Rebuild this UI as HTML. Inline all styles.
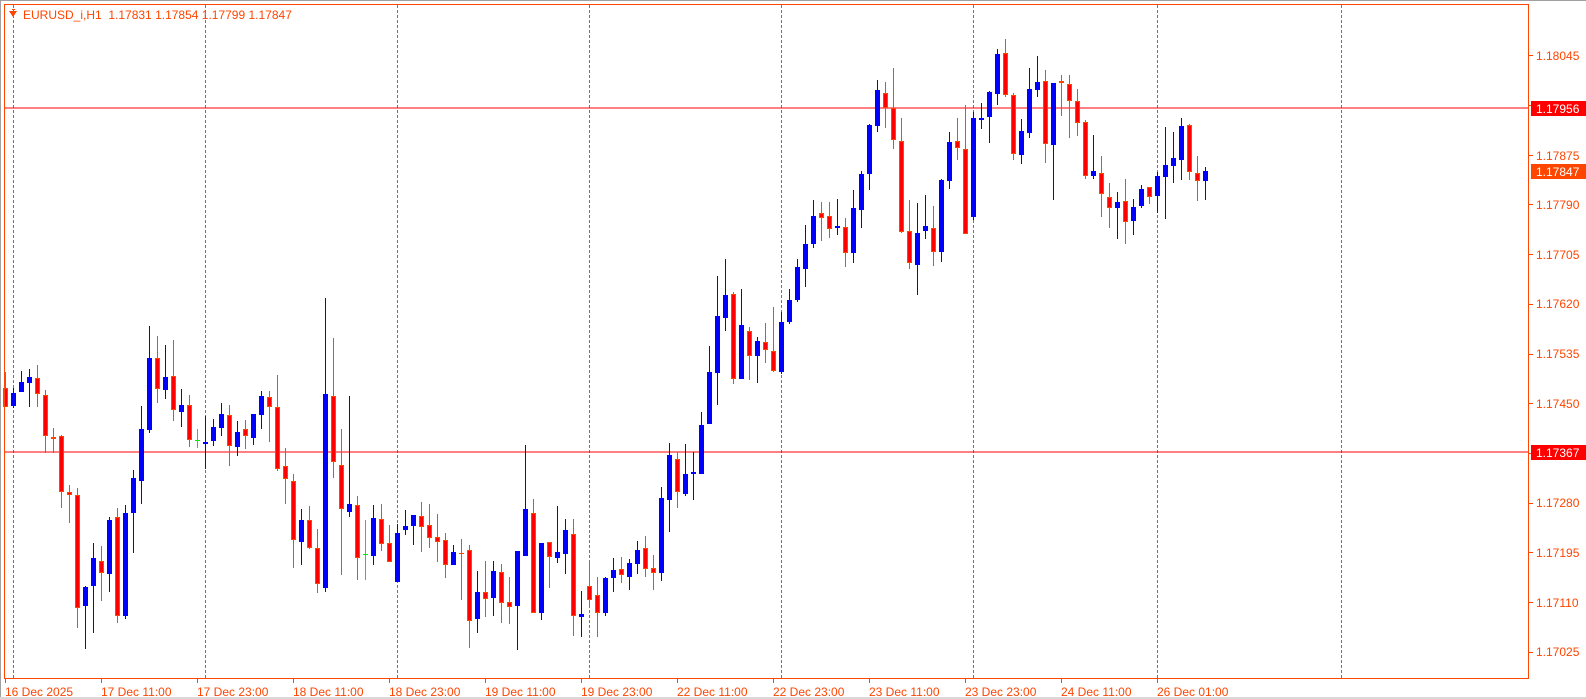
<!DOCTYPE html>
<html><head><meta charset="utf-8"><style>
html,body{margin:0;padding:0;background:#fff;width:1586px;height:699px;overflow:hidden}
svg{position:absolute;left:0;top:0}
text{font-family:"Liberation Sans",sans-serif;font-size:12px}
</style></head><body>
<svg id="c" width="1586" height="699" xmlns="http://www.w3.org/2000/svg" shape-rendering="crispEdges">
<rect x="0" y="0" width="1586" height="1" fill="#a0a0a0"/>
<rect x="0" y="0" width="1" height="699" fill="#a0a0a0"/>
<rect x="0" y="697" width="1586" height="2" fill="#d8d8d8"/>
<g id="vl" stroke="#ff4500" stroke-width="1" stroke-dasharray="3,2"></g>
<rect x="4" y="107.5" width="1525" height="1" fill="#ff0000"/>
<rect x="4" y="451.5" width="1525" height="1" fill="#ff0000"/>
<g id="cd"></g>
<rect x="4.5" y="4.5" width="1524" height="674" fill="none" stroke="#ff4500" stroke-width="1"/>
<g id="tk" fill="#ff4500"></g>
<polygon points="9,11 17,11 13,17" fill="#ff4500"/>
<rect x="12" y="9" width="3" height="1" fill="#ff4500"/>
<text x="23" y="19" fill="#ff4500">EURUSD_i,H1&#160;&#160;1.17831 1.17854 1.17799 1.17847</text>
<g fill="#ff4500">
<text x="1536" y="60">1.18045</text>
<text x="1536" y="160">1.17875</text>
<text x="1536" y="209">1.17790</text>
<text x="1536" y="259">1.17705</text>
<text x="1536" y="308">1.17620</text>
<text x="1536" y="358">1.17535</text>
<text x="1536" y="408">1.17450</text>
<text x="1536" y="507">1.17280</text>
<text x="1536" y="557">1.17195</text>
<text x="1536" y="607">1.17110</text>
<text x="1536" y="656">1.17025</text>
</g>
<rect x="1531" y="101" width="55" height="15" fill="#ff0000"/>
<text x="1536" y="113" fill="#fff">1.17956</text>
<rect x="1531" y="164" width="55" height="15" fill="#ff4500"/>
<text x="1536" y="176" fill="#fff">1.17847</text>
<rect x="1531" y="445" width="55" height="15" fill="#ff0000"/>
<text x="1536" y="457" fill="#fff">1.17367</text>
<g fill="#ff4500">
<text x="5" y="696">16 Dec 2025</text>
<text x="101" y="696">17 Dec 11:00</text>
<text x="197" y="696">17 Dec 23:00</text>
<text x="293" y="696">18 Dec 11:00</text>
<text x="389" y="696">18 Dec 23:00</text>
<text x="485" y="696">19 Dec 11:00</text>
<text x="581" y="696">19 Dec 23:00</text>
<text x="677" y="696">22 Dec 11:00</text>
<text x="773" y="696">22 Dec 23:00</text>
<text x="869" y="696">23 Dec 11:00</text>
<text x="965" y="696">23 Dec 23:00</text>
<text x="1061" y="696">24 Dec 11:00</text>
<text x="1157" y="696">26 Dec 01:00</text>
</g>
</svg>
<script>
var D=[["r",372,388,407,407],["b",388,393,406,408],["b",371,382,392,392],["b",369,377,383,407],["r",365,378,394,407],["r",390,395,436,453],["r",428,437,439,453],["r",435,436,492,508],["r",485,492,495,523],["r",488,495,608,628],
["b",586,587,606,649],["b",543,558,586,633],["r",546,561,573,601],["b",517,520,574,592],["r",508,517,616,623],["b",505,513,616,619],["b",470,478,513,553],["b",406,429,481,504],["b",326,358,430,433],["r",336,358,389,403],
["b",345,377,390,399],["r",340,376,410,421],["b",389,405,412,427],["r",395,405,440,447],["g",429,440,440,448],["b",416,442,444,469],["b",419,427,441,446],["b",403,414,428,436],["r",405,415,446,466],["b",421,432,447,456],
["r",420,429,436,449],["b",414,414,438,445],["b",391,396,415,429],["r",391,397,407,442],["r",375,407,469,471],["r",448,466,479,504],["r",474,481,540,568],["b",509,520,542,565],["r",506,520,548,549],["r",529,548,584,593],
["b",298,394,588,592],["r",338,396,462,478],["r",429,465,509,575],["b",396,504,512,517],["r",496,505,558,580],["g",520,554,554,580],["b",505,518,556,565],["r",504,519,544,551],["r",525,543,562,562],["b",524,533,582,582],
["b",510,526,530,535],["b",515,515,526,545],["r",502,516,527,552],["r",504,525,538,548],["r",514,537,542,562],["r",533,540,565,578],["b",545,552,565,565],["r",539,553,553,600],["r",545,550,621,648],["b",571,592,619,633],
["r",561,592,599,617],["b",561,571,598,616],["r",564,572,603,623],["r",577,602,607,624],["b",551,551,606,650],["b",445,509,556,556],["r",499,513,613,613],["b",543,543,613,620],["r",542,542,557,588],["b",506,552,558,563],
["b",519,530,554,574],["r",519,534,616,636],["b",591,614,617,637],["r",562,586,600,605],["r",577,595,613,637],["b",577,578,613,616],["b",558,570,578,592],["r",557,569,575,583],["b",559,563,577,590],["b",541,550,564,574],
["r",536,548,569,577],["r",555,568,573,590],["b",487,498,573,581],["b",443,455,500,532],["r",452,459,492,508],["b",444,474,494,496],["b",452,472,473,500],["b",412,425,474,474],["b",346,372,424,424],["b",276,316,373,405],
["b",259,295,318,331],["r",292,294,379,384],["b",289,325,379,379],["r",327,331,356,380],["b",337,341,356,383],["r",323,342,350,363],["r",307,351,371,372],["b",312,322,372,374],["b",289,300,322,324],["b",259,267,300,302],
["b",225,244,269,287],["b",200,216,244,248],["r",202,213,218,241],["r",202,216,229,238],["b",199,226,228,235],["r",218,227,253,267],["b",190,208,253,263],["b",171,174,210,228],["b",124,125,174,190],["b",80,90,126,132],
["r",82,93,108,128],["r",68,108,140,149],["r",118,141,232,233],["r",200,231,263,269],["b",203,233,265,295],["b",195,226,231,239],["r",206,228,252,266],["b",179,180,252,262],["b",132,142,181,189],["r",118,141,148,160],
["r",105,149,234,234],["b",112,118,217,220],["b",103,118,120,129],["b",91,92,117,143],["b",49,54,94,105],["r",39,53,95,97],["r",93,95,154,160],["b",119,131,155,164],["b",68,89,133,138],["b",56,82,90,97],
["r",70,81,144,163],["b",83,83,145,200],["r",75,81,83,116],["r",75,84,101,138],["r",89,101,123,136],["r",120,122,176,179],["b",135,171,176,179],["r",156,173,194,217],["r",183,197,208,228],["b",192,202,208,239],
["r",179,201,222,244],["b",199,207,221,235],["b",185,189,206,208],["r",187,187,197,204],["b",172,176,196,213],["b",127,165,177,219],["b",132,158,166,183],["b",118,126,160,180],["r",124,125,172,180],["r",156,173,181,201],
["b",167,171,181,200]];
var NS="http://www.w3.org/2000/svg",s="";
for(var i=0;i<D.length;i++){var d=D[i],c=5+8*i,col=d[0]=="b"?"#0000ff":(d[0]=="g"?"#00ee00":"#ff4500");
s+='<rect x="'+c+'" y="'+d[1]+'" width="1" height="'+(d[4]-d[1])+'" fill="'+col+'"/>';
var h=d[3]-d[2];
if(h<2){s+='<rect x="'+(c-2)+'" y="'+d[2]+'" width="5" height="'+Math.max(1,h+1)+'" fill="'+col+'"/>';}
else if(d[0]=="b"){s+='<rect x="'+(c-2)+'" y="'+d[2]+'" width="5" height="'+h+'" fill="#0000ff"/>';}
else{s+='<rect x="'+(c-2)+'" y="'+d[2]+'" width="5" height="'+h+'" fill="#ff4500"/><rect x="'+(c-1)+'" y="'+(d[2]+1)+'" width="3" height="'+(h-2)+'" fill="#ff0000"/>';}}
document.getElementById("cd").innerHTML=s;
var v="",xs=[13,205,397,589,781,973,1157,1341];
for(var j=0;j<xs.length;j++)v+='<line x1="'+(xs[j]+0.5)+'" y1="5" x2="'+(xs[j]+0.5)+'" y2="678"/>';
document.getElementById("vl").innerHTML=v;
var t="";for(var k=0;k<13;k++)t+='<rect x="'+(5+96*k)+'" y="679" width="1" height="4"/>';
var ys=[55,105,155,204,254,304,354,403,453,503,552,602,652];
for(var m=0;m<ys.length;m++)t+='<rect x="1529" y="'+ys[m]+'" width="4" height="1"/>';
document.getElementById("tk").innerHTML=t;
</script>
</body></html>
